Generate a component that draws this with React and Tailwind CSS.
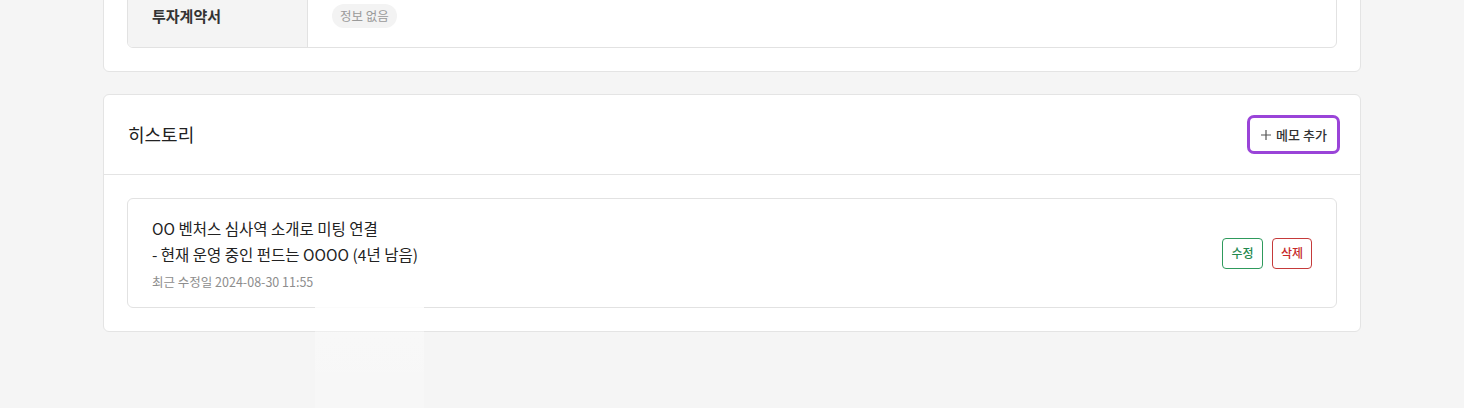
import React from 'react'

const font = { fontFamily: '"Noto Sans CJK KR", "Noto Sans", sans-serif' }

function InfoCard() {
    return (
        <section className="-mt-[40px] bg-white border border-[#e4e4e4] rounded-[6px] p-[23px]">
            <div className="flex border border-[#e2e2e2] rounded-[6px] overflow-hidden">
                <div className="w-[180px] shrink-0 bg-[#f4f4f4] border-r border-[#e2e2e2] h-[62px] flex items-center px-6 text-[15px] font-bold text-[#333]">
                    투자계약서
                </div>
                <div className="flex-1 flex items-center px-6">
                    <span className="h-[24px] px-[8px] rounded-full bg-[#f3f3f3] text-[12.5px] text-[#9a9a9a] flex items-center">정보 없음</span>
                </div>
            </div>
        </section>
    )
}

function HistoryItem() {
    return (
        <div className="flex items-center border border-[#e2e2e2] rounded-[6px] px-6 pt-[16px] pb-[16px]">
            <div className="flex-1">
                <p className="text-[15.5px] leading-[26px] text-[#222]">OO 벤처스 심사역 소개로 미팅 연결</p>
                <p className="text-[15.5px] leading-[26px] text-[#222]">- 현재 운영 중인 펀드는 OOOO (4년 남음)</p>
                <p className="mt-[6px] text-[12.5px] leading-[18px] text-[#8d8d8d]">최근 수정일 2024-08-30 11:55</p>
            </div>
            <div className="flex gap-[9px]">
                <button className="h-[31px] w-[41px] rounded-[4px] border border-[#2e9a5c] text-[12px] font-medium text-[#23894e] bg-white">수정</button>
                <button className="h-[31px] w-[40px] rounded-[4px] border border-[#c53a3a] text-[12px] font-medium text-[#c62828] bg-white">삭제</button>
            </div>
        </div>
    )
}

export default function App() {
    return (
        <div className="relative h-[408px] overflow-hidden bg-[#f5f5f5] px-[103px]" style={font}>
            <InfoCard />

            <section className="mt-[22px] bg-white border border-[#e4e4e4] rounded-[6px]">
                <div className="h-[80px] flex items-center justify-between pl-6 pr-[20px] border-b border-[#e4e4e4]">
                    <h2 className="text-[18px] text-[#222]">히스토리</h2>
                    <button className="h-[39px] w-[93px] flex items-center justify-center gap-[4px] rounded-[7px] border-[3px] border-[#9a44d8] bg-white text-[13px] font-medium text-[#333]">
                        <svg width="12" height="12" viewBox="0 0 12 12" fill="none"><path d="M6 1v10M1 6h10" stroke="#555" strokeWidth="1.2" /></svg>
                        메모 추가
                    </button>
                </div>
                <div className="p-[23px]">
                    <HistoryItem />
                </div>
            </section>

            {/* faded leftover overlay */}
            <div className="absolute left-[315px] top-[304px] w-[109px] h-[104px] bg-linear-to-b from-white/95 via-white/30 via-30% to-white/20 pointer-events-none" />
        </div>
    )
}
